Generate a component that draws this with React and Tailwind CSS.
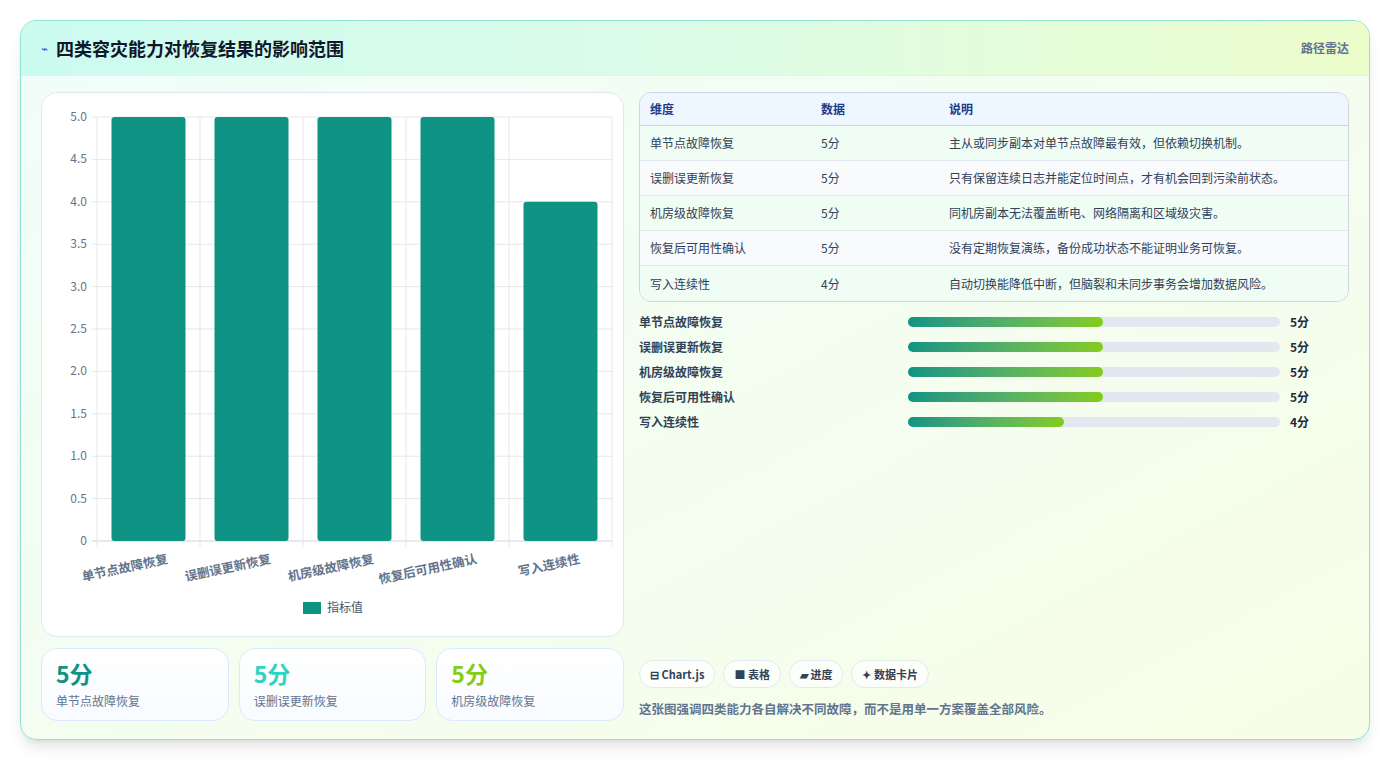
const rows = [
  { name: "单节点故障恢复", v: 5, note: "主从或同步副本对单节点故障最有效，但依赖切换机制。" },
  { name: "误删误更新恢复", v: 5, note: "只有保留连续日志并能定位时间点，才有机会回到污染前状态。" },
  { name: "机房级故障恢复", v: 5, note: "同机房副本无法覆盖断电、网络隔离和区域级灾害。" },
  { name: "恢复后可用性确认", v: 5, note: "没有定期恢复演练，备份成功状态不能证明业务可恢复。" },
  { name: "写入连续性", v: 4, note: "自动切换能降低中断，但脑裂和未同步事务会增加数据风险。" },
];

const font = { fontFamily: '"Noto Sans CJK SC", "Noto Sans", sans-serif' };

function Chart() {
  const left = 55, top = 24, bottom = 448, right = 570;
  const ticks = [0, 0.5, 1, 1.5, 2, 2.5, 3, 3.5, 4, 4.5, 5];
  const cw = (right - left) / 5;
  const y = (v) => bottom - (v / 5) * (bottom - top);
  return (
    <svg width="582" height="544" style={font}>
      {ticks.map((t) => (
        <g key={t}>
          <line x1={left - 5} x2={right} y1={y(t)} y2={y(t)} stroke={t === 0 ? "#cbd5e1" : "#e5e7eb"} />
          <text x={left - 10} y={y(t) + 4} fontSize="12" fill="#64748b" textAnchor="end">
            {t === 0 ? "0" : t.toFixed(1)}
          </text>
        </g>
      ))}
      {[0, 1, 2, 3, 4, 5].map((i) => (
        <line key={i} x1={left + i * cw} x2={left + i * cw} y1={top} y2={bottom + 6} stroke="#e5e7eb" />
      ))}
      {rows.map((r, i) => (
        <g key={r.name}>
          <rect x={left + i * cw + 14.5} y={y(r.v)} width="74" height={bottom - y(r.v)} rx="3" fill="#0e9384" />
          <text
            transform={`translate(${left + i * cw + cw / 2 + 20},${bottom + 22}) rotate(-12)`}
            fontSize="12.5" fontWeight="600" fill="#64748b" textAnchor="end"
          >
            {r.name}
          </text>
        </g>
      ))}
      <rect x="261" y="509" width="18" height="12" fill="#0e9384" />
      <text x="285" y="519" fontSize="12" fill="#475569">指标值</text>
    </svg>
  );
}

export default function App() {
  return (
    <div className="min-h-screen bg-white p-5" style={font}>
      <div className="flex h-[720px] flex-col overflow-hidden rounded-2xl border border-[#8fe3d3] bg-gradient-to-br from-[#f0fdfa] to-[#f7fee7] shadow-lg">
        <div className="flex h-[55px] items-center justify-between border-b border-[#dff3ee] bg-gradient-to-r from-[#ccfbf1] via-[#dcfce7] to-[#ecfccb] px-5">
          <div className="flex items-center gap-2">
            <span className="text-xs text-blue-600">⌁</span>
            <h1 className="text-lg font-bold text-[#0f172a]">四类容灾能力对恢复结果的影响范围</h1>
          </div>
          <span className="text-xs font-semibold text-slate-500">路径雷达</span>
        </div>
        <div className="flex flex-1 gap-[15px] px-5 pt-4 pb-4">
          <div className="flex w-[583px] flex-col gap-[11px]">
            <div className="h-[545px] rounded-2xl border border-[#e2e8f0] bg-white">
              <Chart />
            </div>
            <div className="grid grid-cols-3 gap-[10px]">
              {[
                ["#0e9384", rows[0].name],
                ["#2dd4bf", rows[1].name],
                ["#84cc16", rows[2].name],
              ].map(([c, n]) => (
                <div key={n} className="h-[73px] rounded-2xl border border-[#dbeafe] bg-gradient-to-b from-white to-[#f8fbff] px-[14px] pt-2">
                  <div className="text-[23px] font-bold leading-8" style={{ color: c }}>5分</div>
                  <div className="mt-1 text-xs text-slate-500">{n}</div>
                </div>
              ))}
            </div>
          </div>
          <div className="flex flex-1 flex-col">
            <div className="overflow-hidden rounded-xl border border-[#cbd5e1] text-xs">
              <div className="grid h-[33px] grid-cols-[171px_128px_1fr] items-center border-b border-[#cbd5e1] bg-[#eef6ff] px-[10px] font-semibold text-[#1e3a8a]">
                <span>维度</span><span>数据</span><span>说明</span>
              </div>
              {rows.map((r, i) => (
                <div key={r.name} className={`grid h-[35px] grid-cols-[171px_128px_1fr] items-center px-[10px] text-slate-700 ${i < 4 ? "border-b border-[#e2e8f0]" : ""} ${i % 2 ? "bg-[#f8fafc]" : "bg-[#f0fdf4]"}`}>
                  <span>{r.name}</span><span>{r.v}分</span><span>{r.note}</span>
                </div>
              ))}
            </div>
            <div className="mt-[11px] flex flex-col gap-[7px]">
              {rows.map((r) => (
                <div key={r.name} className="flex h-[18px] items-center text-xs text-slate-700">
                  <span className="w-[269px] font-semibold">{r.name}</span>
                  <div className="h-[10px] w-[372px] rounded-full bg-[#e2e8f0]">
                    <div className="h-full rounded-full bg-gradient-to-r from-[#0e9384] to-[#84cc16]" style={{ width: r.v === 5 ? "52.4%" : "42%" }} />
                  </div>
                  <span className="ml-[10px] font-bold text-slate-800">{r.v}分</span>
                </div>
              ))}
            </div>
            <div className="mt-auto flex gap-2 text-[11px] font-semibold text-slate-700">
              {["⊟ Chart.js", "■ 表格", "▰ 进度", "✦ 数据卡片"].map((t) => (
                <span key={t} className="rounded-full border border-[#e2e8f0] bg-white/70 px-[10px] py-[5px]">{t}</span>
              ))}
            </div>
            <p className="mt-[12px] mb-[4px] text-[12.5px] font-semibold text-slate-500">这张图强调四类能力各自解决不同故障，而不是用单一方案覆盖全部风险。</p>
          </div>
        </div>
      </div>
    </div>
  );
}
